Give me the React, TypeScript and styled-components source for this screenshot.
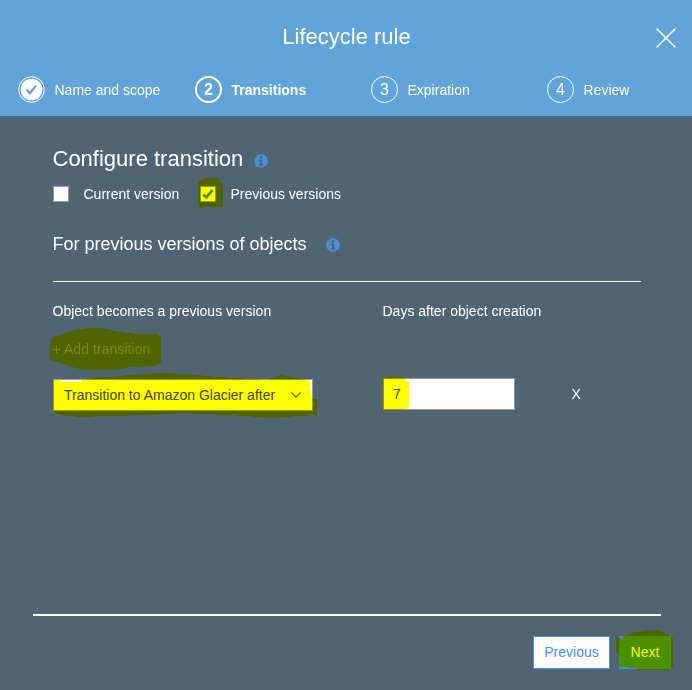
import React from 'react';
import styled, { createGlobalStyle, css } from 'styled-components';

const GlobalStyle = createGlobalStyle`
  * { box-sizing: border-box; }
  body { margin: 0; font-family: "Liberation Sans", Arial, sans-serif; font-size: 14px; color: #fff; }
`;

const Dialog = styled.div`
  display: flex;
  flex-direction: column;
  width: 692px;
  height: 690px;
  overflow: hidden;
  background: #506471;
`;

const Header = styled.header`
  display: flex;
  flex-direction: column;
  height: 116px;
  flex: none;
  background: #61a4da;
`;

const TitleBar = styled.div`
  display: grid;
  grid-template-columns: 1fr auto 1fr;
  align-items: center;
  height: 76px;
  padding: 0 15px 3px;
`;

const Title = styled.h1`
  grid-column: 2;
  margin: 0;
  padding-left: 1px;
  font-size: 22px;
  line-height: 26px;
  font-weight: 400;
`;

const CloseButton = styled.button`
  justify-self: end;
  width: 22px;
  height: 22px;
  margin-top: 3px;
  padding: 0;
  border: 0;
  background: none;
  color: #fff;
  svg { display: block; }
`;

const Steps = styled.ol`
  display: grid;
  grid-template-columns: 177px repeat(3, 176px);
  margin: 0;
  padding: 0 0 0 18px;
  list-style: none;
`;

const Step = styled.li<{ $active?: boolean }>`
  display: flex;
  align-items: center;
  gap: 9.5px;
  height: 27px;
  font-weight: ${p => (p.$active ? 700 : 400)};
`;

const StepMark = styled.span<{ $active?: boolean }>`
  display: flex;
  align-items: center;
  justify-content: center;
  width: 27px;
  height: 27px;
  border: ${p => (p.$active ? '2px' : '1px')} solid #fff;
  border-radius: 50%;
  font-size: 16px;
  padding-top: 1px;
`;

const Body = styled.main`
  flex: 1;
  padding: 30px 51px 0 52.5px;
`;

const Heading = styled.h2<{ $small?: boolean }>`
  display: flex;
  align-items: center;
  margin: 0;
  font-weight: 400;
  font-size: 22px;
  line-height: 26px;
  gap: 10.5px;
  svg { margin-top: 4px; }
  ${p => p.$small && css`
    margin-top: 29px;
    font-size: 18px;
    line-height: 22px;
    gap: 19.5px;
    svg { margin-top: 2px; }
  `}
`;

const Options = styled.div`
  display: flex;
  margin-top: 12px;
  height: 20px;
`;

const Option = styled.label<{ $width: number }>`
  display: flex;
  align-items: center;
  gap: 14.5px;
  width: ${p => p.$width}px;
  padding-left: 0.5px;
  white-space: nowrap;
`;

const CheckBox = styled.span`
  position: relative;
  display: flex;
  align-items: center;
  justify-content: center;
  width: 16px;
  height: 16px;
  border: 1px solid #999;
  background: #fff;
  color: #4a90d9;
`;

const Rule = styled.hr`
  margin: 26px 0 21px 0.5px;
  border: 0;
  height: 1px;
  background: #fff;
`;

const Columns = styled.div`
  display: grid;
  grid-template-columns: 330px 189px 1fr;
  align-items: center;
`;

const AddLink = styled.div`
  position: relative;
  width: max-content;
  margin: 21px 0;
  line-height: 18px;
  letter-spacing: 0.06px;
  color: #808b9a;
`;

const Select = styled.div`
  position: relative;
  display: flex;
  align-items: center;
  justify-content: space-between;
  width: 260px;
  height: 32px;
  margin-left: 0.5px;
  padding: 0 10px;
  border: 1px solid #999;
  background: #fff;
  color: #444;
`;

const DaysInput = styled.div`
  position: relative;
  width: 132px;
  height: 32px;
  margin: -2px 0 0 0.5px;
  padding: 0 9px;
  border: 1px solid #999;
  background: #fff;
  color: #444;
  line-height: 31px;
`;

const Remove = styled.span`
  margin-top: -2px;
`;

const Footer = styled.footer`
  height: 76px;
  margin: 0 31px 0 33px;
  border-top: 2px solid #fff;
  padding-top: 20px;
`;

const Actions = styled.div`
  display: flex;
  justify-content: flex-end;
  gap: 9px;
  margin-right: -10px;
`;

const Button = styled.button<{ $primary?: boolean }>`
  position: relative;
  width: ${p => (p.$primary ? '52px' : '77px')};
  height: 33px;
  padding: 0 0 2px;
  border: 1px solid #4a90d9;
  background: ${p => (p.$primary ? '#4a90d9' : '#fff')};
  color: ${p => (p.$primary ? '#fff' : '#4a90d9')};
  font: 14px "Liberation Sans", Arial, sans-serif;
`;

const Marker = styled.svg<{ $x: number; $y: number }>`
  position: absolute;
  left: ${p => p.$x}px;
  top: ${p => p.$y}px;
  overflow: visible;
  pointer-events: none;
  mix-blend-mode: multiply;
  fill: #ff0;
`;

function Highlight({ x, y, d }: { x: number; y: number; d: string }) {
  return (
    <Marker $x={x} $y={y} width="1" height="1" shapeRendering="crispEdges">
      <path d={d} fillRule="evenodd" />
    </Marker>
  );
}

function InfoIcon() {
  return (
    <svg width="14" height="14" viewBox="0 0 14 14">
      <circle cx="7" cy="7" r="6.8" fill="#4a90d9" />
      <path d="M5.8 2.2h2.4v2.2H5.8zM4.8 5.4h3.4v4.8h1.2v1.5H4.8v-1.5H6V7H4.8z" fill="#506471" />
    </svg>
  );
}

function DoneIcon() {
  return (
    <svg width="27" height="27" viewBox="0 0 27 27">
      <circle cx="13.5" cy="13.5" r="12.8" fill="none" stroke="#fff" />
      <circle cx="13.5" cy="13.5" r="10.8" fill="#fff" />
      <path d="M8.7 13.7l3.3 3.5 6-7.6" fill="none" stroke="#61a4da" strokeWidth="2.2" />
    </svg>
  );
}

export default function App() {
  return (
    <>
      <GlobalStyle />
      <Dialog>
        <Header>
          <TitleBar>
            <Title>Lifecycle rule</Title>
            <CloseButton aria-label="Close">
              <svg width="22" height="22" viewBox="0 0 22 22">
                <path d="M2 2l18 18M20 2L2 20" stroke="currentColor" strokeWidth="1.5" strokeLinecap="round" />
              </svg>
            </CloseButton>
          </TitleBar>
          <Steps>
            <Step><DoneIcon />Name and scope</Step>
            <Step $active><StepMark $active>2</StepMark>Transitions</Step>
            <Step><StepMark>3</StepMark>Expiration</Step>
            <Step><StepMark>4</StepMark>Review</Step>
          </Steps>
        </Header>
        <Body>
          <Heading>Configure transition <InfoIcon /></Heading>
          <Options>
            <Option $width={147}><CheckBox />Current version</Option>
            <Option $width={160}>
              <CheckBox>
                <svg width="12" height="12" viewBox="0 0 12 12">
                  <path d="M1.2 6.4l3 3 6.4-7.3" fill="none" stroke="currentColor" strokeWidth="2.6" />
                </svg>
                <Highlight x={-3} y={-9} d="M0 5l1-2 3-1 2-2h14l2 2 1 3 2 1v23H0z" />
              </CheckBox>
              Previous versions
            </Option>
          </Options>
          <Heading $small>For previous versions of objects <InfoIcon /></Heading>
          <Rule />
          <Columns>
            <span>Object becomes a previous version</span>
            <span>Days after object creation</span>
          </Columns>
          <AddLink>
            + Add transition
            <Highlight x={-3} y={-12} d="M0 12l3-3 8-2 10-4 17-3h14l18 4 17 2h20l4 3v26l-6 3-25 1-13 3H34l-12-3-12-4-10-3z" />
          </AddLink>
          <Columns>
            <Select>
              Transition to Amazon Glacier after
              <svg width="12" height="8" viewBox="0 0 12 8">
                <path d="M1.3 1.5L6 6.2l4.7-4.7" fill="none" stroke="#4a90d9" strokeWidth="1.4" />
              </svg>
              <Highlight x={-1} y={-7} d="M0 7h8v2h20V7l16-2 23-2 20-2 25-1 20 1 34 3 49 3 4-2 9-3 10 2 17 3 2 1 1 18h6v16l-19 1-26 2-27-2-62-3-33 2-43 1-27 1-20-2-7-4z" />
            </Select>
            <DaysInput>
              7
              <Highlight x={-1} y={-2} d="M0 1h4V0h16v1l4 3 2 2v24l-3 2-9 1H0z" />
            </DaysInput>
            <Remove>X</Remove>
          </Columns>
        </Body>
        <Footer>
          <Actions>
            <Button>Previous</Button>
            <Button $primary>
              Next
              <Highlight x={-4} y={-7} d="M0 7h3v1h4V6l3-1 10-3 11-2h12l5 2 6 4 3 3v28l-3 2-8 1H23l-2-1V38h-8v-1H3V23H0z" />
            </Button>
          </Actions>
        </Footer>
      </Dialog>
    </>
  );
}
